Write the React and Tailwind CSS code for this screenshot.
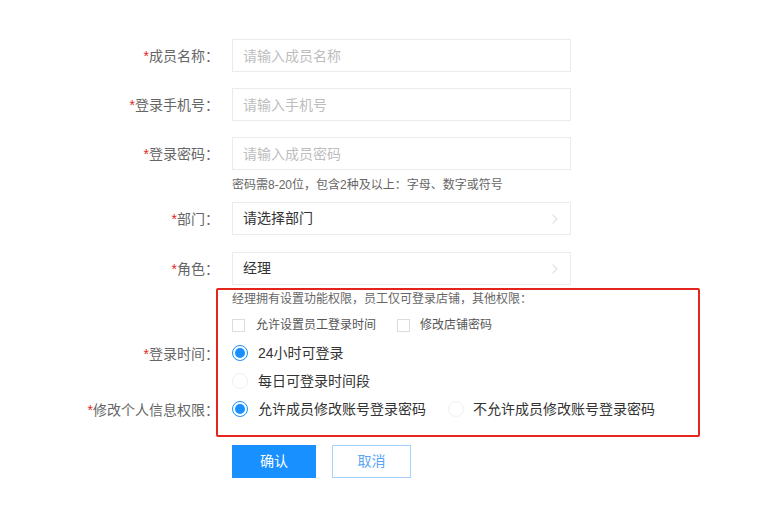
import { useState } from "react";

const FONT = { fontFamily: '"Liberation Sans", "Noto Sans CJK SC", sans-serif' };

function Label({ children }) {
    return (
        <div className="w-[220px] shrink-0 pr-[1px] text-right text-[14px] text-[#666] translate-y-[1px]">
            <span className="text-[#e4251d]">*</span>
            {children}：
        </div>
    );
}

function Chevron() {
    return (
        <svg width="8" height="12" viewBox="0 0 8 12" fill="none">
            <path d="M1.5 1.5L6 6l-4.5 4.5" stroke="#e3e3e3" strokeWidth="1.2" />
        </svg>
    );
}

function Radio({ checked }) {
    return checked ? (
        <span className="w-4 h-4 rounded-full border border-[#1890ff] flex items-center justify-center shrink-0">
            <span className="w-[10px] h-[10px] rounded-full bg-[#1890ff]" />
        </span>
    ) : (
        <span className="w-4 h-4 rounded-full border border-[#f0f0f0] shrink-0" />
    );
}

function Checkbox({ className = "" }) {
    return <span className={`block w-[13px] h-[13px] border border-[#dcdcdc] shrink-0 ${className}`} />;
}

export default function App() {
    const [loginTime, setLoginTime] = useState("all");
    const [allowEdit, setAllowEdit] = useState(true);

    return (
        <div className="w-[778px] h-[511px] bg-white relative" style={FONT}>
            <div className="pt-[39px] flex flex-col">

                <div className="flex items-center h-[33px]">
                    <Label>成员名称</Label>
                    <input
                        placeholder="请输入成员名称"
                        className="ml-[12px] w-[339px] h-[33px] border border-[#ebebeb] px-[10px] text-[14px] text-[#333] placeholder:text-[#bdbdbd] outline-none"
                    />
                </div>

                <div className="flex items-center h-[33px] mt-[16px]">
                    <Label>登录手机号</Label>
                    <input
                        placeholder="请输入手机号"
                        className="ml-[12px] w-[339px] h-[33px] border border-[#ebebeb] px-[10px] text-[14px] text-[#333] placeholder:text-[#bdbdbd] outline-none"
                    />
                </div>

                <div className="flex items-center h-[33px] mt-[16px]">
                    <Label>登录密码</Label>
                    <input
                        placeholder="请输入成员密码"
                        className="ml-[12px] w-[339px] h-[33px] border border-[#ebebeb] px-[10px] text-[14px] text-[#333] placeholder:text-[#bdbdbd] outline-none"
                    />
                </div>
                <div className="ml-[232px] mt-[7px] text-[12px] text-[#666] leading-[16px]">
                    密码需8-20位，包含2种及以上：字母、数字或符号
                </div>

                <div className="flex items-center h-[33px] mt-[9px]">
                    <Label>部门</Label>
                    <div className="ml-[12px] w-[339px] h-[33px] border border-[#ebebeb] px-[10px] flex items-center justify-between text-[14px] text-[#333]">
                        <span>请选择部门</span>
                        <span className="mr-[1px]"><Chevron /></span>
                    </div>
                </div>

                <div className="flex items-center h-[33px] mt-[17px]">
                    <Label>角色</Label>
                    <div className="ml-[12px] w-[339px] h-[33px] border border-[#ebebeb] px-[10px] flex items-center justify-between text-[14px] text-[#333]">
                        <span>经理</span>
                        <span className="mr-[1px]"><Chevron /></span>
                    </div>
                </div>

                <div className="ml-[232px] mt-[6px] text-[12px] text-[#666] leading-[16px]">
                    经理拥有设置功能权限，员工仅可登录店铺，其他权限：
                </div>

                <div className="ml-[232px] mt-[10px] flex items-center h-[16px] text-[12px] text-[#555]">
                    <Checkbox />
                    <span className="ml-[11px]">允许设置员工登录时间</span>
                    <Checkbox className="ml-[21px]" />
                    <span className="ml-[10px]">修改店铺密码</span>
                </div>

                <div className="flex items-center h-[20px] mt-[10px]">
                    <Label>登录时间</Label>
                    <div
                        className="ml-[12px] flex items-center cursor-pointer text-[14px] text-[#333]"
                        onClick={() => setLoginTime("all")}
                    >
                        <Radio checked={loginTime === "all"} />
                        <span className="ml-[10px]">24小时可登录</span>
                    </div>
                </div>

                <div className="flex items-center h-[20px] mt-[8px]">
                    <div className="w-[220px] shrink-0" />
                    <div
                        className="ml-[12px] flex items-center cursor-pointer text-[14px] text-[#333]"
                        onClick={() => setLoginTime("range")}
                    >
                        <Radio checked={loginTime === "range"} />
                        <span className="ml-[10px]">每日可登录时间段</span>
                    </div>
                </div>

                <div className="flex items-center h-[20px] mt-[8px]">
                    <Label>修改个人信息权限</Label>
                    <div
                        className="ml-[12px] flex items-center cursor-pointer text-[14px] text-[#333]"
                        onClick={() => setAllowEdit(true)}
                    >
                        <Radio checked={allowEdit} />
                        <span className="ml-[10px]">允许成员修改账号登录密码</span>
                    </div>
                    <div
                        className="ml-[22px] flex items-center cursor-pointer text-[14px] text-[#333]"
                        onClick={() => setAllowEdit(false)}
                    >
                        <Radio checked={!allowEdit} />
                        <span className="ml-[9px]">不允许成员修改账号登录密码</span>
                    </div>
                </div>

                <div className="ml-[232px] mt-[26px] flex gap-[16px]">
                    <button className="w-[84px] h-[33px] bg-[#1890ff] text-white text-[14px]">
                        确认
                    </button>
                    <button className="w-[79px] h-[33px] border border-[#a6d2ff] text-[#5aa6f5] text-[14px] bg-white">
                        取消
                    </button>
                </div>
            </div>

            {/* annotation box */}
            <div className="absolute left-[216px] top-[288px] w-[484px] h-[149px] border-2 border-[#e4251d] rounded-[2px] pointer-events-none" />
        </div>
    );
}
